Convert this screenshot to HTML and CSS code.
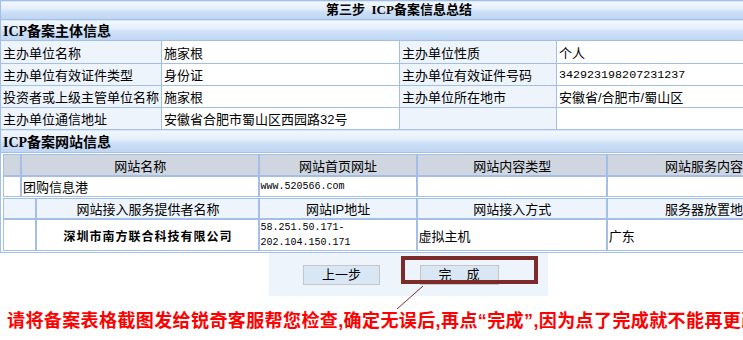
FILE: index.html
```html
<!DOCTYPE html>
<html lang="zh-CN">
<head>
  <meta charset="UTF-8">
  <title>ICP备案信息总结</title>
  <link rel="stylesheet" href="styles.css">
</head>
<body>

<div class="page">
  <table class="info">
    <colgroup><col class="c1"><col class="c2"><col class="c3"><col class="c4"></colgroup>
    <tr class="title"><th colspan="4">第三步&nbsp;&nbsp;ICP备案信息总结</th></tr>
    <tr class="band"><th colspan="4">ICP备案主体信息</th></tr>
    <tr class="row-first">
      <td class="label">主办单位名称</td><td>施家根</td>
      <td class="label">主办单位性质</td><td>个人</td>
    </tr>
    <tr>
      <td class="label">主办单位有效证件类型</td><td>身份证</td>
      <td class="label">主办单位有效证件号码</td><td class="mono big">342923198207231237</td>
    </tr>
    <tr>
      <td class="label">投资者或上级主管单位名称</td><td>施家根</td>
      <td class="label">主办单位所在地市</td><td>安徽省/合肥市/蜀山区</td>
    </tr>
    <tr>
      <td class="label">主办单位通信地址</td><td>安徽省合肥市蜀山区西园路32号</td>
      <td class="label"></td><td></td>
    </tr>
    <tr class="band band-site"><th colspan="4">ICP备案网站信息</th></tr>
    <tr>
      <td colspan="4" class="site-cell">
        <!-- site basic info -->
        <table class="site site-a">
          <colgroup><col style="width:18px"><col style="width:236px"><col style="width:157px"><col style="width:189px"><col style="width:192px"></colgroup>
          <tr class="head">
            <td></td><td>网站名称</td><td>网站首页网址</td><td>网站内容类型</td><td>网站服务内容</td>
          </tr>
          <tr class="plain">
            <td></td><td>团购信息港</td><td class="mono">www.520566.com</td><td></td><td></td>
          </tr>
        </table>
        <!-- access info -->
        <table class="site site-b">
          <colgroup><col style="width:33px"><col style="width:221px"><col style="width:157px"><col style="width:189px"><col style="width:192px"></colgroup>
          <tr class="subhead">
            <td></td><td>网站接入服务提供者名称</td><td>网站IP地址</td><td>网站接入方式</td><td>服务器放置地</td>
          </tr>
          <tr class="access">
            <td></td>
            <td class="company">深圳市南方联合科技有限公司</td>
            <td class="mono">58.251.50.171-<br>202.104.150.171</td>
            <td>虚拟主机</td>
            <td>广东</td>
          </tr>
        </table>
      </td>
    </tr>
  </table>

  <div class="actions">
    <button class="btn">上一步</button>
    <button class="btn btn-done">完　成</button>
  </div>

  <!-- hand-drawn annotation -->
  <div class="mark"></div>
  <svg class="mark-line" width="32" height="28" viewBox="0 0 32 28">
    <line x1="28" y1="2" x2="2" y2="25" stroke="#7d2a2a" stroke-width="1"/>
  </svg>

  <p class="notice">请将备案表格截图发给锐奇客服帮您检查,确定无误后,再点“完成”,因为点了完成就不能再更改</p>
</div>

</body>
</html>
```

FILE: styles.css
```css
html, body { margin:0; padding:0; overflow:hidden; background:#fff; }
body { font-family:"Liberation Sans", "Noto Sans CJK SC", sans-serif; font-size:13px; color:#000; }
.page { position:relative; width:795px; }

/* main summary table */
.info { width:795px; border-collapse:collapse; table-layout:fixed; }
.info td, .info th { border:1px solid #a3bfe8; padding:0 0 0 2px; height:21px; text-align:left; vertical-align:middle; white-space:nowrap; overflow:hidden; }
.info .c1 { width:161px; }
.info .c2 { width:238px; }
.info .c3 { width:157px; }
.info .c4 { width:239px; }
.info .row-first td { height:22px; }
.info td.label { background:#eef4fc; }

.info tr.title th { height:18px; text-align:center; font-weight:bold; font-family:"Liberation Serif", "Noto Sans CJK SC", serif; font-size:13px; line-height:14px; }
.info tr.band th { height:20px; font-weight:bold; font-family:"Liberation Serif", "Noto Sans CJK SC", serif; font-size:14px; }
.info tr.title th, .info tr.band th {
  background:linear-gradient(to bottom, #f3f8fe 0%, #e4eefb 40%, #cadef6 60%, #bed6f3 100%);
}
.info tr.band-site th { height:22px; }

.mono { font-family:"Liberation Mono", monospace; font-size:10px; }
.mono.big { font-size:11.7px; }

/* website tables */
.info td.site-cell { padding:1px 0 1px 2px; height:auto; background:#fff; }
.site { border-collapse:separate; border-spacing:0; table-layout:fixed; width:797px; }
.site td { border:1px solid #a3bfe8; padding:0 0 0 1px; white-space:nowrap; overflow:hidden; height:auto; vertical-align:middle; }
.site-b { margin-top:1px; }
.site .head td { background:#cfd6df; height:20px; text-align:center; }
.site .plain td { height:15px; background:#fff; }
.site .subhead td { background:#eef4fc; height:15px; text-align:center; }
.site .access td { height:29px; background:#fff; }
.site .access td.mono { line-height:15px; font-size:10px; vertical-align:top; }
.site td.company { text-align:center; font-weight:bold; font-size:12px; letter-spacing:1px; }

/* bottom buttons */
.actions { margin-left:269px; width:245px; height:43px; padding-left:34px; background:#eef4fc; display:flex; align-items:center; gap:40px; }
.btn { height:20px; width:77px; padding:0; background:#d9e6f3; border:1px solid #c6c6c6; font-family:"Liberation Sans", "Noto Sans CJK SC", sans-serif; font-size:13px; color:#000; line-height:16px; }
.btn-done { width:79px; letter-spacing:1px; }

.mark { position:absolute; left:401px; top:256px; width:137px; height:28px; box-sizing:border-box; border:4px solid #7d2a2a; }
.mark-line { position:absolute; left:395px; top:284px; }

.notice { margin:15px 0 0 7px; white-space:nowrap; color:#f00; font-weight:bold; font-size:18px; line-height:20px; letter-spacing:0.4px; }
```
